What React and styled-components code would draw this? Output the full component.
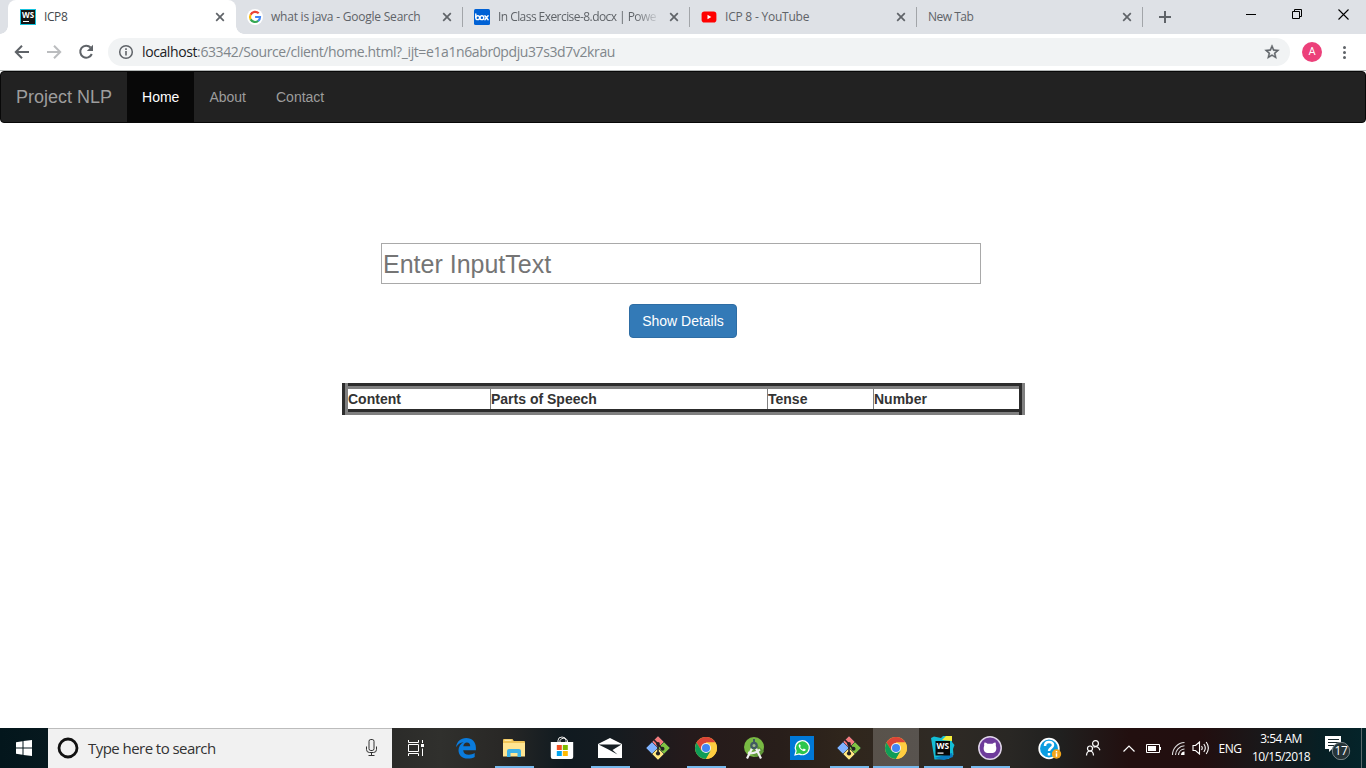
import React from "react";
import styled, { createGlobalStyle } from "styled-components";

const ui = '"Open Sans", "Noto Sans", sans-serif';
const arial = '"Liberation Sans", Arial, sans-serif';

const Global = createGlobalStyle`
  * { box-sizing: border-box; }
  html, body { margin: 0; padding: 0; background: #fff; overflow: hidden; }
  svg { display: block; flex: none; }
`;

const Screen = styled.div`
  width: 1366px;
  height: 768px;
  display: flex;
  flex-direction: column;
  background: #fff;
`;

/* ---------- tab strip ---------- */
const TabStrip = styled.div`
  height: 34px;
  flex: none;
  display: flex;
  background: #dee1e6;
  padding-left: 8px;
`;

const Tab = styled.div`
  position: relative;
  width: ${(p) => p.$width}px;
  height: 34px;
  flex: none;
  display: flex;
  align-items: center;
  padding: 0 ${(p) => (p.$active ? 11 : 10)}px 0 ${(p) => p.$pad}px;
  background: ${(p) => (p.$active ? "#fff" : "transparent")};
  border-radius: 8px 8px 0 0;
  &::before, &::after {
    content: "";
    display: ${(p) => (p.$active ? "block" : "none")};
    position: absolute;
    bottom: 0;
    width: 8px;
    height: 8px;
  }
  &::before { left: -8px; background: radial-gradient(circle at 0 0, transparent 7.5px, #fff 8px); }
  &::after { right: -8px; background: radial-gradient(circle at 100% 0, transparent 7.5px, #fff 8px); }
`;

const TabTitle = styled.div`
  flex: 1;
  min-width: 0;
  margin: 0 8px 0 ${(p) => p.$gap}px;
  white-space: nowrap;
  font: 12px/16px ${ui};
  letter-spacing: ${(p) => p.$ls || -0.22}px;
  color: ${(p) => (p.$active ? "#45494d" : "#5f6368")};
  ${(p) => p.$fade && "mask-image: linear-gradient(90deg, #000 calc(100% - 26px), transparent);"}
`;

const Divider = styled.div`
  width: 1px;
  height: 20px;
  margin-top: 7px;
  background: #a2a5a9;
`;

const NewTab = styled.div`
  padding: 11px 0 0 16px;
`;

const WindowButtons = styled.div`
  margin-left: auto;
  display: flex;
`;

const WindowButton = styled.div`
  width: 46px;
  height: 28px;
  display: flex;
  align-items: center;
  justify-content: center;
`;

/* ---------- toolbar ---------- */
const Toolbar = styled.div`
  height: 37px;
  flex: none;
  display: flex;
  align-items: flex-start;
  padding: 4px 13px 0 12px;
  border-bottom: 1px solid #b3b7b6;
`;

const NavButton = styled.div`
  width: 32px;
  height: 28px;
  display: flex;
  align-items: center;
`;

const Omnibox = styled.div`
  width: 1182px;
  height: 28px;
  display: flex;
  align-items: center;
  padding: 0 10px 0 10px;
  border-radius: 14px;
  background: #f1f3f4;
`;

const Url = styled.div`
  flex: 1;
  margin-left: 8px;
  font: 14px/20px ${ui};
  letter-spacing: -0.395px;
  color: #80868b;
  white-space: nowrap;
`;

const Host = styled.span`
  color: #202124;
`;

const Avatar = styled.div`
  width: 20px;
  height: 20px;
  margin: 4px 0 0 12px;
  border-radius: 50%;
  background: #ec407a;
  color: #fff;
  font: 11px/20px Roboto, sans-serif;
  text-align: center;
`;

const Menu = styled.div`
  margin: 6px 0 0 14px;
`;

/* ---------- page ---------- */
const Page = styled.main`
  flex: 1;
  display: flex;
  flex-direction: column;
  align-items: center;
  font-family: ${arial};
  font-size: 14px;
  line-height: 20px;
  color: #333;
`;

const Navbar = styled.nav`
  width: 100%;
  height: 52px;
  display: flex;
  background: #222;
  border: 1px solid #080808;
  border-radius: 4px;
`;

const Brand = styled.div`
  padding: 15px;
  font-size: 18px;
  line-height: 20px;
  color: #9d9d9d;
`;

const NavLink = styled.div`
  padding: 15px;
  color: ${(p) => (p.$active ? "#fff" : "#9d9d9d")};
  background: ${(p) => (p.$active ? "#080808" : "transparent")};
`;

const TextInput = styled.input`
  width: 600px;
  height: 41px;
  margin: 120px 4px 0 0;
  padding: 2px 1px 0;
  border: 1px solid #a9a9a9;
  border-radius: 0;
  font: 25px ${arial};
  outline: none;
  &::placeholder { color: #757575; opacity: 1; }
`;

const Button = styled.button`
  width: 108px;
  height: 34px;
  margin-top: 20px;
  padding: 6px 0;
  background: #337ab7;
  border: 1px solid #2e6da4;
  border-radius: 4px;
  color: #fff;
  font: 14px/20px ${arial};
`;

/* Ridged frame: each side is a dark and a gray 3px band. */
const TableSides = styled.div`
  margin-top: 45px;
  margin-left: 1px;
  border-left: 3px solid #2c2c2c;
  border-right: 3px solid #808080;
`;

const TableSidesInner = styled.div`
  border-left: 3px solid #808080;
  border-right: 3px solid #2c2c2c;
`;

const TableEdges = styled.div`
  border-top: 3px solid #2c2c2c;
  border-bottom: 3px solid #808080;
`;

const TableRow = styled.div`
  display: flex;
  border-top: 3px solid #808080;
  border-bottom: 3px solid #2c2c2c;
`;

const HeadCell = styled.div`
  width: ${(p) => p.$width}px;
  height: 20px;
  border-left: ${(p) => (p.$first ? 0 : 1)}px solid #808080;
  font-weight: bold;
`;

/* ---------- taskbar ---------- */
const Taskbar = styled.div`
  height: 40px;
  flex: none;
  display: flex;
  color: #fff;
  font-family: ${ui};
  background: linear-gradient(90deg, #03161c 0, #06181e 48px, #2b2b29 392px, #30302d 440px, #292826 500px,
    #101a20 565px, #141b20 610px, #251a1b 690px, #281e1a 780px, #30261c 850px, #2f2a24 930px, #292724 1010px,
    #20201f 1060px, #220f0f 1130px, #220e0f 1200px, #18191b 1270px, #071f24 1320px, #04242a 1366px);
`;

const Start = styled.div`
  width: 48px;
  display: flex;
  align-items: center;
  justify-content: center;
`;

const Search = styled.div`
  width: 344px;
  display: flex;
  align-items: center;
  padding: 0 14px 2px 9px;
  background: #f1f1f1;
  border-top: 1px solid #bcbcbc;
`;

const SearchText = styled.div`
  flex: 1;
  margin-left: 9px;
  font: 15px/20px ${ui};
  letter-spacing: -0.55px;
  color: #333;
`;

const AppCell = styled.div`
  width: ${(p) => p.$width || 48}px;
  margin-right: ${(p) => p.$gap || 0}px;
  height: 40px;
  display: flex;
  align-items: center;
  justify-content: center;
  background: ${(p) => (p.$active ? "rgba(255,255,255,.2)" : "transparent")};
  box-shadow: ${(p) => (p.$active ? "inset 0 -2px #76b9ed" : "none")};
`;

const AppMark = styled.div`
  width: 39px;
  height: 40px;
  display: flex;
  align-items: center;
  justify-content: center;
  box-shadow: ${(p) => (p.$open ? "inset 0 -2px #76b9ed" : "none")};
`;

const Tray = styled.div`
  margin-left: auto;
  display: flex;
  align-items: center;
`;

const TrayItem = styled.div`
  width: ${(p) => p.$width}px;
  padding-left: ${(p) => p.$pad || 0}px;
  display: flex;
  justify-content: center;
  font-size: 12px;
  letter-spacing: -0.4px;
`;

const Clock = styled.div`
  width: 66px;
  font-size: 12px;
  line-height: 18px;
  letter-spacing: -0.55px;
  text-align: center;
`;

const ShowDesktop = styled.div`
  width: 5px;
  height: 40px;
  border-left: 1px solid #5b696c;
`;

/* ---------- icons ---------- */
const Close = () => (
  <svg width="10" height="10" viewBox="0 0 10 10"><path d="M1.2 1.2l7.6 7.6M8.8 1.2L1.2 8.8" stroke="#5f6368" strokeWidth="1.7" /></svg>
);

const WebStormTab = () => (
  <svg width="16" height="16" viewBox="0 0 16 16">
    <rect width="16" height="16" fill="#15c2dd" /><rect x="1" y="1" width="14" height="14" fill="#151515" />
    <text x="8" y="8.6" fontSize="8" fontWeight="700" fontFamily="Open Sans" textAnchor="middle" fill="#fff">WS</text>
    <rect x="3" y="12" width="6" height="1" fill="#fff" />
  </svg>
);

const Google = () => (
  <svg width="16" height="16" viewBox="0 0 16 16">
    <circle cx="8" cy="8" r="8" fill="#fff" />
    <g fill="none" strokeWidth="2.2">
      <path d="M11.7 4.3A5 5 0 0 0 3.6 5.7" stroke="#ea4335" />
      <path d="M3.6 5.7a5 5 0 0 0 0 4.7" stroke="#fbbc05" />
      <path d="M3.6 10.4a5 5 0 0 0 7.7 1.3" stroke="#34a853" />
      <path d="M8.1 8H13a5 5 0 0 1-1.8 3.8" stroke="#4285f4" />
    </g>
  </svg>
);

const Box = () => (
  <svg width="16" height="16" viewBox="0 0 16 16">
    <rect width="16" height="16" rx="1.5" fill="#0061d5" />
    <g fill="none" stroke="#fff" strokeWidth="1.4" strokeLinecap="round" strokeLinejoin="round">
      <path d="M1.8 5v3.3M10.9 6.7l3.2 4M14.1 6.7l-3.2 4" /><circle cx="3.7" cy="8.7" r="1.9" /><circle cx="7.9" cy="8.7" r="1.9" />
    </g>
  </svg>
);

const YouTube = () => (
  <svg width="16" height="16" viewBox="0 0 16 16"><rect x=".6" y="2.6" width="14.8" height="11" rx="2.8" fill="#f00" /><path d="M6.5 5.8v4.5L10.3 8z" fill="#fff" /></svg>
);

const Arrow = ({ color, flip }) => (
  <svg width="20" height="20" viewBox="0 0 20 20"><path transform={flip ? "translate(20 0) scale(-1 1)" : undefined} d="M17 10H4M10 3.8L3.8 10l6.2 6.2" fill="none" stroke={color} strokeWidth="2" /></svg>
);

const Reload = () => (
  <svg width="20" height="20" viewBox="0 0 20 20"><path d="M14.6 5.5A6 6 0 1 0 15.8 12" fill="none" stroke="#5f6368" strokeWidth="2" /><path d="M17 2.8V9h-6.2z" fill="#5f6368" /></svg>
);

const Info = () => (
  <svg width="16" height="16" viewBox="0 0 16 16"><circle cx="8" cy="8" r="6.3" fill="none" stroke="#5f6368" strokeWidth="1.5" /><path d="M8 7v4.5M8 4.3v1.6" stroke="#5f6368" strokeWidth="1.6" /></svg>
);

const Star = () => (
  <svg width="16" height="16" viewBox="1 1 22 22"><path d="M22 9.24l-7.19-.62L12 2 9.19 8.63 2 9.24l5.46 4.73L5.82 21 12 17.27 18.18 21l-1.63-7.03L22 9.24zM12 15.4l-3.76 2.27 1-4.28-3.32-2.88 4.38-.38L12 6.1l1.71 4.04 4.38.38-3.32 2.88 1 4.28L12 15.4z" fill="#5f6368" stroke="#5f6368" strokeWidth=".6" /></svg>
);

const Edge = () => (
  <svg width="22" height="22" viewBox="0 0 22 22"><path d="M1 10.3C1.6 4.6 5.8 1 11.2 1c6 0 9.7 4.2 9.7 9.8v2.4H8.2c.2 3 2.4 4.5 5.7 4.5 2.1 0 4-.6 5.8-1.7v4C17.900 21 15.500 21.500 12.800 21.500 7 21.500 3.500 18 3.500 13.200c0-3.700 2-6.500 5.200-8C5 5.500 2.600 7.500 1 10.300zm7.300-1h6.900c0-2.400-1.100-3.900-3.300-3.900-2 0-3.300 1.500-3.600 3.900z" fill="#0a7bdc" /></svg>
);

const Explorer = () => (
  <svg width="22" height="18" viewBox="0 0 22 18">
    <path d="M0 1q0-1 1-1h8.500l1.300 2H21q1 0 1 1v14H0z" fill="#f0c559" /><path d="M0 4h22v13.500H0z" fill="#ffe592" /><path d="M1.500 1.300h7" stroke="#fff0b8" />
    <path d="M4 18v-6q0-2 2-2h10q2 0 2 2v6h-3.500v-4h-7v4z" fill="#3db2e8" />
  </svg>
);

const Store = () => (
  <svg width="24" height="24" viewBox="0 0 24 24">
    <path d="M8 7V4.500a4 3.500 0 0 1 8 0V7M10 7V4.500a4 3.500 0 0 1 7.500 0V7" fill="none" stroke="#e8e8e8" strokeWidth="1" /><path d="M.8 6h22.400v15q0 2-2 2H2.800q-2 0-2-2z" fill="#fff" />
    <path d="M6.800 9h5v5h-5z" fill="#f25022" /><path d="M12.800 9h5v5h-5z" fill="#7fba00" /><path d="M6.800 15h5v5h-5z" fill="#00a4ef" /><path d="M12.800 15h5v5h-5z" fill="#ffb900" />
  </svg>
);

const Mail = () => (
  <svg width="24" height="20" viewBox="0 0 24 20"><path d="M0 6L12 0l12 6v14H0z" fill="#fff" /><path d="M.5 6.500h23L14.500 12l5 4.500L9.500 11z" fill="#182025" /></svg>
);

const Git = () => (
  <svg width="24" height="24" viewBox="0 0 24 24">
    <g stroke="#243039" strokeWidth=".5"><path d="M12 0l6 6-6 6-6-6z" fill="#f37a7c" /><path d="M6 6l6 6-6 6-6-6z" fill="#80b3ff" /><path d="M18 6l6 6-6 6-6-6z" fill="#80c342" /><path d="M12 12l6 6-6 6-6-6z" fill="#ffe680" /></g>
    <path d="M8 4l4 4v10M12 8.500l4.800 4.600" fill="none" stroke="#222" strokeWidth="1.600" /><circle cx="12" cy="8" r="1.900" fill="#222" /><circle cx="12" cy="17.500" r="2.100" fill="#222" /><circle cx="16.500" cy="12.800" r="2" fill="#222" />
  </svg>
);

const Chrome = () => (
  <svg width="22" height="22" viewBox="0 0 22 22">
    <circle cx="11" cy="11" r="11" fill="#ffcd40" />
    <path d="M1.500 5.500A11 11 0 0 1 20.500 5.500H11L6.200 13.700z" fill="#db4437" /><path d="M1.500 5.500A11 11 0 0 0 11 22l4.800-8.300-9.500-.2z" fill="#0f9d58" /><path d="M11 5.500h9.500A11 11 0 0 1 11 22l4.800-8.300z" fill="#ffcd40" />
    <circle cx="11" cy="11" r="5" fill="#f1f1f1" /><circle cx="11" cy="11" r="4" fill="#4285f4" />
  </svg>
);

const AndroidStudio = () => (
  <svg width="22" height="24" viewBox="0 0 22 24">
    <circle cx="11" cy="11" r="10" fill="#78b943" /><path d="M8 18L14 9l7 6a10 10 0 0 1-8 6z" fill="#60973a" />
    <path d="M9.200 12L4 22.500M12.800 12L18 22.500" stroke="#f1f1f1" strokeWidth="2.200" /><path d="M5 16.500q6 2.500 12-3" fill="none" stroke="#eee" strokeWidth="2" />
    <circle cx="11" cy="9.500" r="3.800" fill="#425b61" /><circle cx="11" cy="9.500" r="1.500" fill="#9dbc85" /><path d="M11 3v4" stroke="#425b61" strokeWidth="2" />
  </svg>
);

const WhatsApp = () => (
  <svg width="24" height="24" viewBox="0 0 24 24">
    <path d="M0 0h24v24H0z" fill="#0078d7" /><path d="M5 19l1.100-4A7 7 0 1 1 9 17.900z" fill="#2cc64d" stroke="#fff" strokeWidth="1.200" />
    <path d="M9.500 8.200q-1.300.8-.7 2.400 1.500 3.700 5 4.600 1.800 0 2-1.700l-2-1-1 1q-2-.8-2.700-2.500l.7-.9-.8-1.900z" fill="#fff" />
  </svg>
);

const WebStorm = () => (
  <svg width="24" height="24" viewBox="0 0 24 24">
    <path d="M0 2l3-1.500 7 1.500 2-2h9v6l2.500 3-1.500 4 .5 6-5 4-14 .5z" fill="#13bdd5" /><path d="M11 4l4-4h6v5z" fill="#f6ef3b" /><path d="M3 22l18-5 1 4-9 3z" fill="#087cc2" /><path d="M4.500 5h14.500v14.500H4.500z" fill="#080808" />
    <text x="11.800" y="13" fontSize="8.300" fontWeight="700" fontFamily="Open Sans" textAnchor="middle" fill="#fff">WS</text><path d="M6.500 16.500h6v1.200h-6z" fill="#fff" />
  </svg>
);

const GitHub = () => (
  <svg width="24" height="24" viewBox="0 0 24 24">
    <circle cx="12" cy="12" r="11.200" fill="#6e3b9b" stroke="#dfd4e9" strokeWidth="1.500" /><path d="M6.500 6.500q1.500 0 3 1.300h5q1.500-1.300 3-1.300.6 1.500.3 3.200c1.300 3.500.2 7-3.300 7.300h-5c-3.500-.3-4.600-3.800-3.300-7.300q-.3-1.700.3-3.200z" fill="#fff" />
  </svg>
);

const TaskView = () => (
  <svg width="18" height="16" viewBox="0 0 18 16" fill="none" stroke="#fff"><path d="M1.500 0v2.500h10V0M1.500 16v-2.500h10V16M1.500 4.500h10v7h-10z" /><path d="M15.500 0v3M15.500 8.500V16" /><path d="M14 4h3v3h-3z" fill="#fff" stroke="none" /></svg>
);

const Mic = () => (
  <svg width="13" height="17" viewBox="0 0 13 17" fill="none" stroke="#333"><rect x="4" y=".5" width="5" height="11" rx="1.800" /><path d="M1.500 7.500v3q0 3 3 3h4q3 0 3-3v-3M6.500 13.500v3M3.500 16.500h6" /></svg>
);

const Help = () => (
  <svg width="24" height="24" viewBox="0 0 24 24">
    <circle cx="11" cy="12.500" r="9.800" fill="#0a9de0" stroke="#fff" strokeWidth="1.700" /><path d="M7 10q0-4 4-4t4 3.300c0 2.500-4 3-4 5.700M11 17v2.500" fill="none" stroke="#fff" strokeWidth="2.500" /><circle cx="18.500" cy="18" r="4.700" fill="#f2a51b" /><path d="M18.500 15v1.500M18.500 17.300v3.500" stroke="#fff" strokeWidth="1.500" />
  </svg>
);

const People = () => (
  <svg width="16" height="16" viewBox="0 0 16 16" fill="none" stroke="#fff" strokeWidth="1.200"><circle cx="10.500" cy="3.500" r="2.900" /><path d="M8.500 7.300q4.500-2 6.500 3" /><circle cx="5" cy="8.500" r="2.500" /><path d="M1.500 15.500q.3-4.500 3.500-4.500t3.500 4.500" /></svg>
);

const Wifi = () => (
  <svg width="15" height="15" viewBox="0 0 15 15" fill="none"><g stroke="#ddd" strokeWidth="1.100"><path d="M1.500 14A12.500 12.500 0 0 1 13.500 1.500M4.500 14A9.500 9.500 0 0 1 13.500 4.800M7.500 14A6.500 6.500 0 0 1 13.500 8" /></g><path d="M10 14q0-3.500 3.500-3.500V14z" fill="#fff" /></svg>
);

const Sound = () => (
  <svg width="18" height="14" viewBox="0 0 18 14" fill="none" stroke="#fff" strokeWidth="1.100"><path d="M1 4.500h2.500l4-3.500v12l-4-3.500H1zM9.500 5q1.500 2 0 4M11.800 3q3 4 0 8M14.200 1q4.300 6 0 12" /></svg>
);

const Notifications = () => (
  <svg width="26" height="24" viewBox="0 0 26 24">
    <path d="M0 0h16v13H7l-3 3v-3H0z" fill="#fff" /><path d="M3 3.500h11M3 6.500h11M3 9.500h8" stroke="#16262a" /><circle cx="16" cy="15" r="8.700" fill="#263438" stroke="#7a8588" />
    <text x="16" y="18.700" fontSize="12" letterSpacing="-.4" fontFamily="Open Sans" textAnchor="middle" fill="#fff">17</text>
  </svg>
);

const apps = [
  { icon: <Edge /> },
  { icon: <Explorer />, open: true },
  { icon: <Store /> },
  { icon: <Mail />, open: true },
  { icon: <Git /> },
  { icon: <Chrome />, open: true },
  { icon: <AndroidStudio /> },
  { icon: <WhatsApp /> },
  { icon: <Git />, open: true, width: 46, gap: 1 },
  { icon: <Chrome />, active: true, width: 46, gap: 1 },
  { icon: <WebStorm />, open: true, width: 46, gap: 1 },
  { icon: <GitHub />, open: true, width: 46 },
];

export default function App() {
  return (
    <Screen>
      <Global />
      <TabStrip>
        <Tab $active $width={228} $pad={12}><WebStormTab /><TabTitle $active $gap={8} $ls={-0.4}>ICP8</TabTitle><Close /></Tab>
        <Tab $width={226} $pad={11}><Google /><TabTitle $gap={8}>what is java - Google Search</TabTitle><Close /></Tab>
        <Divider />
        <Tab $width={226} $pad={11}><Box /><TabTitle $gap={8} $ls={-0.56} $fade>In Class Exercise-8.docx | Powe</TabTitle><Close /></Tab>
        <Divider />
        <Tab $width={226} $pad={11}><YouTube /><TabTitle $gap={8}>ICP 8 - YouTube</TabTitle><Close /></Tab>
        <Divider />
        <Tab $width={225} $pad={11}><TabTitle $gap={0} $ls={-0.5}>New Tab</TabTitle><Close /></Tab>
        <Divider />
        <NewTab><svg width="12" height="12" viewBox="0 0 12 12"><path d="M6 0v12M0 6h12" stroke="#5f6368" strokeWidth="2" /></svg></NewTab>
        <WindowButtons>
          <WindowButton><svg width="10" height="10"><path d="M0 5.500h10" stroke="#000" /></svg></WindowButton>
          <WindowButton><svg width="10" height="10" fill="none" stroke="#000"><path d="M.5 2.500h7v7h-7zM2.500 2.500v-2h7v7h-2" /></svg></WindowButton>
          <WindowButton><svg width="11" height="11"><path d="M.5.5l10 10M10.500.5l-10 10" stroke="#000" strokeWidth="1.100" /></svg></WindowButton>
        </WindowButtons>
      </TabStrip>
      <Toolbar>
        <NavButton><Arrow color="#5f6368" /></NavButton>
        <NavButton><Arrow color="#bbbdbf" flip /></NavButton>
        <NavButton><Reload /></NavButton>
        <Omnibox><Info /><Url><Host>localhost</Host>:63342/Source/client/home.html?_ijt=e1a1n6abr0pdju37s3d7v2krau</Url><Star /></Omnibox>
        <Avatar>A</Avatar>
        <Menu><svg width="16" height="16" fill="#5f6368"><circle cx="8.500" cy="3.500" r="1.500" /><circle cx="8.500" cy="8.500" r="1.500" /><circle cx="8.500" cy="13.500" r="1.500" /></svg></Menu>
      </Toolbar>
      <Page>
        <Navbar><Brand>Project NLP</Brand><NavLink $active>Home</NavLink><NavLink>About</NavLink><NavLink>Contact</NavLink></Navbar>
        <TextInput placeholder="Enter InputText" />
        <Button>Show Details</Button>
        <TableSides><TableSidesInner><TableEdges>
          <TableRow>
            <HeadCell $first $width={142}>Content</HeadCell>
            <HeadCell $width={277}>Parts of Speech</HeadCell>
            <HeadCell $width={106}>Tense</HeadCell>
            <HeadCell $width={146}>Number</HeadCell>
          </TableRow>
        </TableEdges></TableSidesInner></TableSides>
      </Page>
      <Taskbar>
        <Start><svg width="16" height="16" fill="#fff"><path d="M0 2.300L6.500 1.300V7.500H0zM7.500 1.100L16 0v7.500H7.500zM0 8.500h6.500v6.200L0 13.700zM7.500 8.500H16V16l-8.500-1.100z" /></svg></Start>
        <Search>
          <svg width="22" height="22"><circle cx="11" cy="11" r="9" fill="none" stroke="#111" strokeWidth="2.800" /></svg>
          <SearchText>Type here to search</SearchText>
          <Mic />
        </Search>
        <AppCell $gap={2}><TaskView /></AppCell>
        {apps.map((a, i) => (
          <AppCell key={i} $width={a.width} $gap={a.gap} $active={a.active}><AppMark $open={a.open}>{a.icon}</AppMark></AppCell>
        ))}
        <Tray>
          <TrayItem $width={50}><Help /></TrayItem>
          <TrayItem $width={36}><People /></TrayItem>
          <TrayItem $width={36}><svg width="12" height="7" fill="none" stroke="#fff" strokeWidth="1.200"><path d="M.5 6.500L6 1l5.500 5.500" /></svg></TrayItem>
          <TrayItem $width={14}><svg width="16" height="9" fill="none" stroke="#fff"><path d="M.5.500h13v8H.500zM14.500 3v3" /><path d="M2 2h8v5H2z" fill="#fff" stroke="none" /></svg></TrayItem>
          <TrayItem $width={34}><Wifi /></TrayItem>
          <TrayItem $width={12}><Sound /></TrayItem>
          <TrayItem $width={41} $pad={5}>ENG</TrayItem>
          <Clock>3:54 AM<br />10/15/2018</Clock>
          <TrayItem $width={47}><Notifications /></TrayItem>
          <ShowDesktop />
        </Tray>
      </Taskbar>
    </Screen>
  );
}
